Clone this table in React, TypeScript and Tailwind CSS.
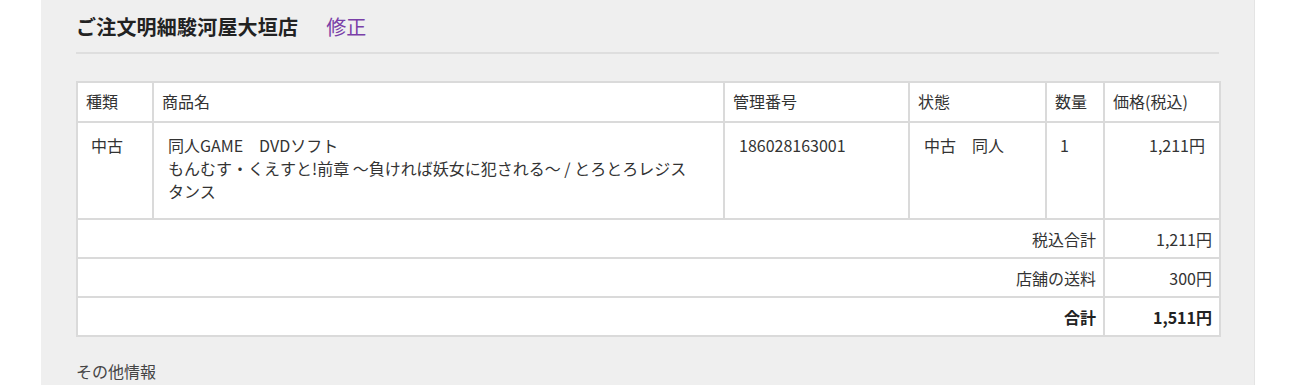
import React from 'react';

const font = { fontFamily: 'Meiryo, "Noto Sans CJK JP", "Noto Sans", sans-serif' };

const headers = [
  { label: '種類', w: 'w-[76px]' },
  { label: '商品名', w: 'w-[571px]' },
  { label: '管理番号', w: 'w-[185px]' },
  { label: '状態', w: 'w-[137px]' },
  { label: '数量', w: 'w-[58px]' },
  { label: '価格(税込)', w: '' },
];

const summary = [
  { label: '税込合計', value: '1,211円', bold: false },
  { label: '店舗の送料', value: '300円', bold: false },
  { label: '合計', value: '1,511円', bold: true },
];

export default function App() {
  return (
    <div className="w-[1300px] h-[385px] bg-white overflow-hidden" style={font}>
      <div className="ml-[41px] w-[1214px] h-full bg-[#efefef] border-r border-[#e4e4e4] px-[35px]">
        {/* heading */}
        <div className="h-[54px] flex items-center border-b-2 border-[#dedede] pt-[2px]">
          <h2 className="text-[20px] font-bold text-[#222] tracking-[0.2px]">ご注文明細駿河屋大垣店</h2>
          <a className="ml-[28px] text-[20px] text-[#7a3fa8]">修正</a>
        </div>

        <table className="mt-[27px] w-[1145px] border-collapse bg-white text-[16px] text-[#333] table-fixed">
          <thead>
            <tr className="h-[40px]">
              {headers.map((h) => (
                <th key={h.label} className={`${h.w} border-2 border-[#dadada] px-[8px] pb-[2px] text-left font-normal`}>
                  {h.label}
                </th>
              ))}
            </tr>
          </thead>
          <tbody>
            <tr className="align-top">
              <td className="border-2 border-[#dadada] pl-[13px] pr-[14px] pt-[11px] pb-[15px] leading-[23px]">中古</td>
              <td className="border-2 border-[#dadada] pl-[14px] pr-[26px] pt-[11px] pb-[15px] leading-[23px]">
                同人GAME　DVDソフト
                <br />
                もんむす・くえすと!前章 ～負ければ妖女に犯される～ / とろとろレジスタンス
              </td>
              <td className="border-2 border-[#dadada] px-[14px] pt-[11px] leading-[23px]">186028163001</td>
              <td className="border-2 border-[#dadada] px-[14px] pt-[11px] leading-[23px]">中古　同人</td>
              <td className="border-2 border-[#dadada] px-[13px] pt-[11px] leading-[23px]">1</td>
              <td className="border-2 border-[#dadada] px-[14px] pt-[11px] leading-[23px] text-right">1,211円</td>
            </tr>
            {summary.map((s) => (
              <tr key={s.label} className={`h-[39px] ${s.bold ? 'font-bold text-[#222]' : ''}`}>
                <td colSpan={5} className="border-2 border-[#dadada] px-[7px] text-right">
                  {s.label}
                </td>
                <td className="border-2 border-[#dadada] px-[7px] text-right">{s.value}</td>
              </tr>
            ))}
          </tbody>
        </table>

        <p className="mt-[22px] text-[16px] text-[#444]">その他情報</p>
      </div>
    </div>
  );
}
